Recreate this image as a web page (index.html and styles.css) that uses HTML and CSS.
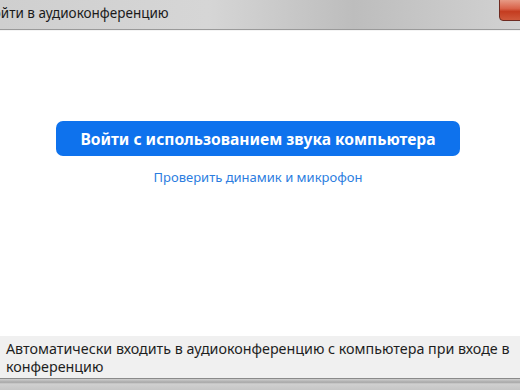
FILE: index.html
```html
<!DOCTYPE html>
<html lang="ru">
<head>
  <meta charset="UTF-8">
  <title>Войти в аудиоконференцию</title>
  <link rel="stylesheet" href="styles.css">
</head>
<body>
  <div class="window">
    <div class="titlebar">
      <span class="title">Войти в аудиоконференцию</span>
      <div class="close-btn"></div>
    </div>

    <div class="content">
      <button class="join-button">Войти с использованием звука компьютера</button>
      <a href="#" class="test-link">Проверить динамик и микрофон</a>
    </div>

    <div class="footer">
      Автоматически входить в аудиоконференцию с компьютера при входе в конференцию
    </div>
    <div class="frame-bottom"></div>
  </div>
</body>
</html>
```

FILE: styles.css
```css
body {
  margin: 0;
  font-family: "Noto Sans", "Open Sans", sans-serif;
  background: #fff;
}

.window {
  width: 520px;
  height: 390px;
  display: flex;
  flex-direction: column;
  overflow: hidden;
}

.titlebar {
  position: relative;
  height: 29px;
  flex: none;
  background: linear-gradient(90deg, #cfcfcf 0%, #d6d6d6 40%, #bdbdbd 68%, #d2d2d2 100%);
  border-bottom: 1px solid #9a9a9a;
  overflow: hidden;
}

.title {
  display: block;
  margin-left: -16px;
  padding-top: 4px;
  font-size: 13.5px;
  color: #1a1a1a;
  white-space: nowrap;
}

/* red window close button, sits over the title bar */
.close-btn {
  position: absolute;
  top: -2px;
  right: -4px;
  width: 23px;
  height: 21px;
  border: 1px solid #6e2a20;
  border-radius: 0 0 0 4px;
  background: linear-gradient(180deg, #e8a08c 0%, #d9634a 45%, #c43c20 60%, #d0593b 100%);
}

.content {
  flex: 1;
  display: flex;
  flex-direction: column;
  align-items: center;
  padding-top: 90px;
  border-top: 1px solid #f4f4f4;
}

.join-button {
  width: 404px;
  height: 35px;
  margin-left: -4px;
  border: none;
  border-radius: 7px;
  background: #0e72ed;
  color: #fff;
  font-family: "Noto Sans", "Open Sans", sans-serif;
  font-size: 15.6px;
  font-weight: bold;
}

.test-link {
  margin-top: 12px;
  margin-left: -4px;
  font-size: 13px;
  color: #2b7de0;
  text-decoration: none;
}

.footer {
  flex: none;
  height: 42px;
  box-sizing: border-box;
  padding: 4px 4px 0 6px;
  background: #f0f0f0;
  font-size: 14.3px;
  line-height: 18px;
  color: #1e1e1e;
}

.frame-bottom {
  flex: none;
  height: 11px;
  background: linear-gradient(180deg, #cfcfcf 0%, #a8a8a8 30%, #d0d0d0 45%, #c6c6c6 100%);
  border-top: 1px solid #8a8a8a;
}
```
